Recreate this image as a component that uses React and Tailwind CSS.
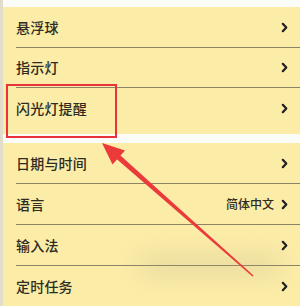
import React from 'react';

const rowsTop = ['悬浮球', '指示灯', '闪光灯提醒'];
const rowsBottom = [
  { label: '日期与时间' },
  { label: '语言', value: '简体中文' },
  { label: '输入法' },
  { label: '定时任务' },
];

function Chevron() {
  return (
    <svg width="7" height="11" viewBox="0 0 7 11" className="shrink-0">
      <path d="M1.8 1.8 L5.3 5.5 L1.8 9.2" fill="none" stroke="#1f1f1f" strokeWidth="2.2" strokeLinecap="round" strokeLinejoin="round" />
    </svg>
  );
}

function Row({ label, value, className = 'h-[40px]' }) {
  return (
    <div className={`${className} flex items-center pl-[13px] pr-[12px]`}>
      <span className="flex-1 text-[14px] font-medium text-[#2e2b22] tracking-[0.2px]">{label}</span>
      {value && <span className="text-[12px] font-medium text-[#2e2b22] mr-[7px]">{value}</span>}
      <Chevron />
    </div>
  );
}

function Divider() {
  return <div className="ml-[13px] h-px bg-[#8c8466]" />;
}

export default function App() {
  return (
    <div
      className="relative w-[300px] h-[306px] overflow-hidden bg-[#fbfbf8] flex"
      style={{ fontFamily: '"Noto Sans CJK SC", "Noto Sans", sans-serif' }}
    >
      <div className="w-[3px] bg-[#e2ddcb]" />
      <div className="flex-1 flex flex-col">
        <div className="h-[11px]" />
        <div className="bg-[#fbeca8] pb-[6px]">
          <Row label={rowsTop[0]} />
          <Divider />
          <Row label={rowsTop[1]} className="h-[39px]" />
          <Divider />
          <Row label={rowsTop[2]} />
        </div>
        <div className="h-[13px]" />
        <div className="bg-[#fbeca8] flex-1">
          {rowsBottom.map((r, i) => (
            <React.Fragment key={r.label}>
              {i > 0 && <Divider />}
              <Row label={r.label} value={r.value} />
            </React.Fragment>
          ))}
        </div>
      </div>

      {/* smudge */}
      <div className="absolute left-[140px] top-[258px] w-[140px] h-[14px] rounded-full bg-[#a59c7c]/30 blur-md" />

      {/* highlight box */}
      <div className="absolute left-[6px] top-[84px] w-[111px] h-[54px] border-2 border-[#e8333a]" />

      {/* arrow */}
      <svg className="absolute left-0 top-0" width="300" height="306" viewBox="0 0 300 306">
        <polygon points="117.7,153.1 253.5,275.5 252.5,276.6 114.3,156.9" fill="#ea3a3a" />
        <polygon points="102,143 125,150.5 112.5,164.5" fill="#ea3a3a" />
      </svg>
    </div>
  );
}
